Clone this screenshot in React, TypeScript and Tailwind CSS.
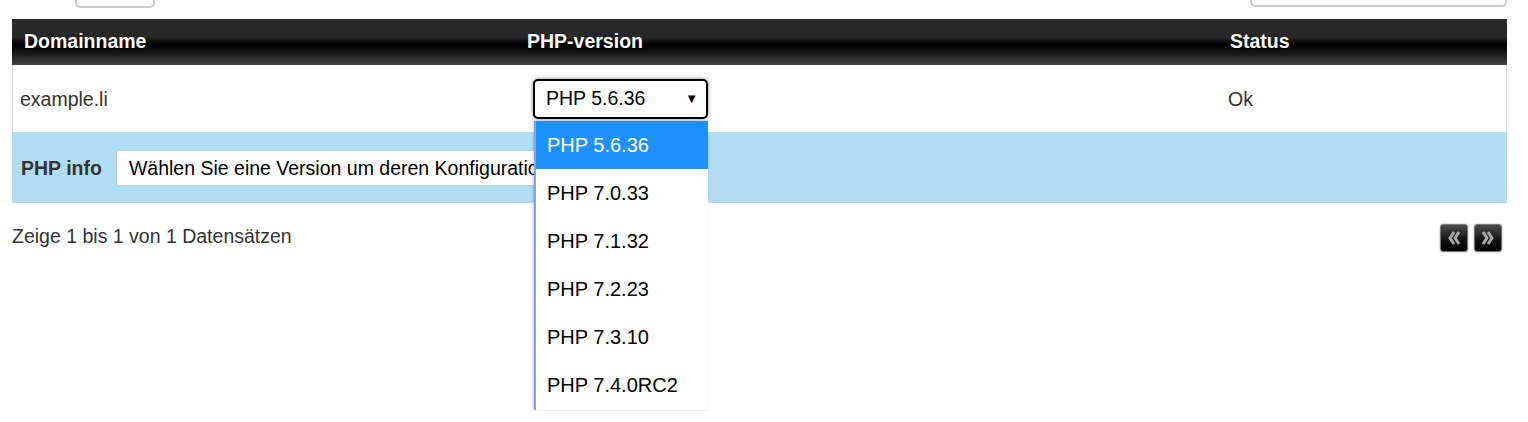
import { useState } from "react";

const versions = [
  "PHP 5.6.36",
  "PHP 7.0.33",
  "PHP 7.1.32",
  "PHP 7.2.23",
  "PHP 7.3.10",
  "PHP 7.4.0RC2",
];

const PagerButton = ({ dir }: { dir: "prev" | "next" }) => (
  <button className="flex h-[28px] w-[28px] items-center justify-center rounded-[3px] border border-[#777] bg-[linear-gradient(#4a4a4a,#111_60%,#000)] shadow-[0_0_2px_rgba(0,0,0,0.4)]">
    <svg width="18" height="18" viewBox="0 0 18 18" fill="none">
      {dir === "prev" ? (
        <path
          d="M9 3 L5 9 L9 15 M14 3 L10 9 L14 15"
          stroke="#a8a8a8"
          strokeWidth="3"
        />
      ) : (
        <path
          d="M4 3 L8 9 L4 15 M9 3 L13 9 L9 15"
          stroke="#a8a8a8"
          strokeWidth="3"
        />
      )}
    </svg>
  </button>
);

export default function App() {
  const [selected] = useState(versions[0]);

  return (
    <div className="relative h-[422px] w-[1528px] overflow-hidden bg-white font-['Liberation_Sans',Arial,sans-serif] text-[19.5px] text-[#333]">
      {/* cut-off controls above the table */}
      <div className="flex h-[19px] items-start justify-between pl-[75px] pr-[21px]">
        <div className="-mt-[30px] h-[38px] w-[80px] rounded-[5px] border-2 border-[#ccc]" />
        <div className="-mt-[30px] h-[37px] w-[257px] rounded-[5px] border-2 border-[#ccc]" />
      </div>

      <div className="mx-[12px] w-[1495px]">
        {/* header */}
        <div className="flex h-[46px] items-center bg-[linear-gradient(#2a2a2a_0%,#272727_40%,#000_55%,#0a0a0a_65%,#414141_100%)] font-bold text-white [text-shadow:0_1px_1px_rgba(0,0,0,0.6)]">
          <div className="w-[503px] pl-[12px]">Domainname</div>
          <div className="w-[703px] pl-[12px]">PHP-version</div>
          <div className="flex-1 pl-[12px]">Status</div>
        </div>

        {/* data row */}
        <div className="flex h-[67px] items-center border-x border-[#ddd] bg-white pt-[3px]">
          <div className="w-[502px] pl-[7px]">example.li</div>
          <div className="relative w-[703px] pl-[18px]">
            <div className="-mt-[3px] flex h-[40px] w-[175px] items-center justify-between rounded-[5px] border-2 border-black bg-white pl-[11px] pr-[8px] text-black shadow-[0_0_4px_rgba(0,0,0,0.45)]">
              <span>{selected}</span>
              <span className="text-[13px]">▼</span>
            </div>
          </div>
          <div className="flex-1 pl-[10px]">Ok</div>
        </div>

        {/* php info row */}
        <div className="flex h-[71px] items-center gap-[14px] bg-[#b0ddf4] pl-[9px] pt-[3px]">
          <span className="font-bold">PHP info</span>
          <div className="-mt-[3px] flex h-[36px] w-[570px] items-center overflow-hidden whitespace-nowrap rounded-[4px] border border-[#ccc] bg-white pl-[12px] pt-[3px] text-black">
            Wählen Sie eine Version um deren Konfiguration anzuzeigen
          </div>
        </div>

        {/* footer */}
        <div className="flex items-center justify-between pt-[21px]">
          <span className="-mt-[2px]">Zeige 1 bis 1 von 1 Datensätzen</span>
          <div className="mr-[5px] flex gap-[6px]">
            <PagerButton dir="prev" />
            <PagerButton dir="next" />
          </div>
        </div>
      </div>

      {/* open select list */}
      <ul className="absolute left-[534px] top-[121px] w-[174px] border-l-2 border-l-[#7fa7dd] bg-white text-[20px] text-black shadow-[-1px_0_2px_rgba(0,0,0,0.2)]">
        {versions.map((v) => (
          <li
            key={v}
            className={
              v === selected
                ? "flex h-[48px] items-center bg-[#1e90ff] pl-[11px] text-white"
                : "flex h-[48px] items-center pl-[11px]"
            }
          >
            {v}
          </li>
        ))}
        <li className="h-[1px]" />
      </ul>
    </div>
  );
}
